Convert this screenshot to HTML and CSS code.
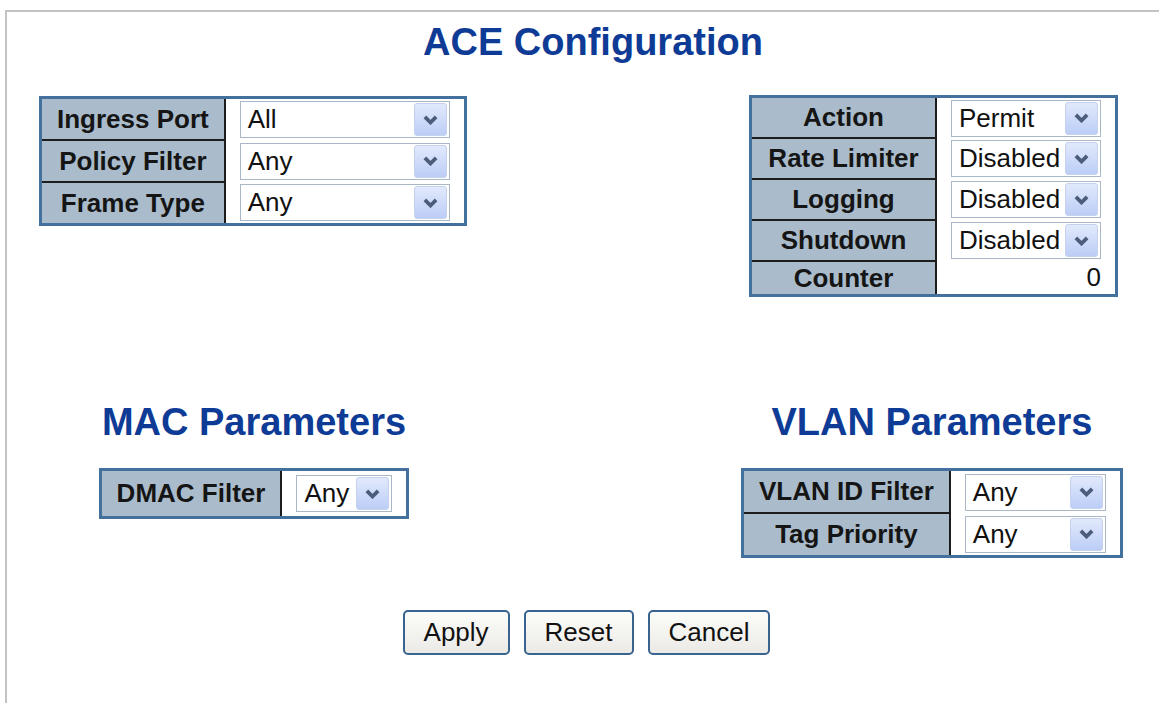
FILE: index.html
```html
<!DOCTYPE html>
<html lang="en">
<head>
	<meta charset="UTF-8">
	<title>ACE Configuration</title>
	<link rel="stylesheet" href="styles.css">
</head>
<body>
	<div class="frame">
		<h1 class="title">ACE Configuration</h1>

		<div class="top-row">
			<table class="config ace-left">
				<tr>
					<th>Ingress Port</th>
					<td><div class="select w-port"><span class="select-text">All</span><span class="select-btn"><svg viewBox="0 0 12 8"><path d="M1.5 1.5l4.5 4.5 4.5-4.5"/></svg></span></div></td>
				</tr>
				<tr>
					<th>Policy Filter</th>
					<td><div class="select w-port"><span class="select-text">Any</span><span class="select-btn"><svg viewBox="0 0 12 8"><path d="M1.5 1.5l4.5 4.5 4.5-4.5"/></svg></span></div></td>
				</tr>
				<tr>
					<th>Frame Type</th>
					<td><div class="select w-port"><span class="select-text">Any</span><span class="select-btn"><svg viewBox="0 0 12 8"><path d="M1.5 1.5l4.5 4.5 4.5-4.5"/></svg></span></div></td>
				</tr>
			</table>

			<table class="config ace-right">
				<tr>
					<th>Action</th>
					<td><div class="select w-action"><span class="select-text">Permit</span><span class="select-btn"><svg viewBox="0 0 12 8"><path d="M1.5 1.5l4.5 4.5 4.5-4.5"/></svg></span></div></td>
				</tr>
				<tr>
					<th>Rate Limiter</th>
					<td><div class="select w-action"><span class="select-text">Disabled</span><span class="select-btn"><svg viewBox="0 0 12 8"><path d="M1.5 1.5l4.5 4.5 4.5-4.5"/></svg></span></div></td>
				</tr>
				<tr>
					<th>Logging</th>
					<td><div class="select w-action"><span class="select-text">Disabled</span><span class="select-btn"><svg viewBox="0 0 12 8"><path d="M1.5 1.5l4.5 4.5 4.5-4.5"/></svg></span></div></td>
				</tr>
				<tr>
					<th>Shutdown</th>
					<td><div class="select w-action"><span class="select-text">Disabled</span><span class="select-btn"><svg viewBox="0 0 12 8"><path d="M1.5 1.5l4.5 4.5 4.5-4.5"/></svg></span></div></td>
				</tr>
				<tr class="counter">
					<th>Counter</th>
					<td class="num">0</td>
				</tr>
			</table>
		</div>

		<div class="param-row">
			<div class="param-col mac-col">
				<h2 class="subtitle">MAC Parameters</h2>
				<table class="config mac">
					<tr>
						<th>DMAC Filter</th>
						<td><div class="select w-dmac"><span class="select-text">Any</span><span class="select-btn"><svg viewBox="0 0 12 8"><path d="M1.5 1.5l4.5 4.5 4.5-4.5"/></svg></span></div></td>
					</tr>
				</table>
			</div>
			<div class="param-col vlan-col">
				<h2 class="subtitle">VLAN Parameters</h2>
				<table class="config vlan">
					<tr>
						<th>VLAN ID Filter</th>
						<td><div class="select w-vlan"><span class="select-text">Any</span><span class="select-btn"><svg viewBox="0 0 12 8"><path d="M1.5 1.5l4.5 4.5 4.5-4.5"/></svg></span></div></td>
					</tr>
					<tr>
						<th>Tag Priority</th>
						<td><div class="select w-vlan"><span class="select-text">Any</span><span class="select-btn"><svg viewBox="0 0 12 8"><path d="M1.5 1.5l4.5 4.5 4.5-4.5"/></svg></span></div></td>
					</tr>
				</table>
			</div>
		</div>

		<div class="buttons">
			<button type="button">Apply</button>
			<button type="button">Reset</button>
			<button type="button">Cancel</button>
		</div>
	</div>
</body>
</html>
```

FILE: styles.css
```css
*{margin:0;padding:0;}
body{
	background: #fff;
	font-family: "Liberation Sans", Arial, sans-serif;
	color: #111;
}
.frame{
	margin: 10px 0 0 5px;
	border-top: 2px solid #c3c3c3;
	border-left: 2px solid #c3c3c3;
	min-height: 693px;
	box-sizing: border-box;
}
.title{
	font-size: 38px;
	line-height: 44px;
	font-weight: bold;
	color: #0e3b95;
	text-align: center;
	padding-left: 20px;
	margin-top: 8px;
}
.subtitle{
	font-size: 38px;
	line-height: 44px;
	font-weight: bold;
	color: #0e3b95;
	text-align: center;
	margin-bottom: 24px;
	white-space: nowrap;
}

/* tables */
.top-row{
	display: flex;
	justify-content: space-between;
	align-items: flex-start;
	padding: 0 41px 0 32px;
	margin-top: 31px;
}
.ace-left{
	margin-top: 1px;
}
.config{
	border-collapse: collapse;
	border: 3px solid #44709e;
	background: #fff;
}
.config th{
	background: #aabccb;
	font-size: 26px;
	font-weight: bold;
	color: #151515;
	text-align: center;
	white-space: nowrap;
	height: 39px;
	padding: 0 15px;
	border-right: 2px solid #1d1d1d;
	border-bottom: 2px solid #1d1d1d;
}
.config tr:last-child th{
	border-bottom: none;
}
.config td{
	padding: 0 14px;
	font-size: 26px;
}
.ace-left th{ width: 151px; height: 40px; }
.ace-right th{ width: 153px; }
.counter th, .counter td{ height: 32px; }
.num{ text-align: right; }
.mac th{ height: 45px; }
.vlan th{ height: 41px; }

/* fake selects */
.select{
	display: flex;
	align-items: center;
	justify-content: space-between;
	height: 37px;
	box-sizing: border-box;
	border: 1px solid #a9b7c7;
	background: #fff;
	padding: 0 2px 0 7px;
	font-size: 26px;
	color: #111;
}
.select-text{
	white-space: nowrap;
}
.select-btn{
	display: flex;
	align-items: center;
	justify-content: center;
	width: 31px;
	height: 31px;
	border: 1px solid #c4d2ee;
	border-radius: 3px;
	background: linear-gradient(#e1e9fc, #bccdf6);
}
.select-btn svg{
	width: 15px;
	height: 10px;
	fill: none;
	stroke: #4c5d7c;
	stroke-width: 3;
}
.w-port{ width: 210px; }
.w-action{ width: 150px; }
.w-dmac{ width: 96px; }
.w-vlan{ width: 141px; }

/* parameter sections */
.param-row{
	display: flex;
	align-items: flex-start;
	padding-left: 92px;
	margin-top: 103px;
}
.param-col{
	display: flex;
	flex-direction: column;
	align-items: center;
}
.mac-col{ width: 310px; }
.vlan-col{ margin-left: 332px; }

/* buttons */
.buttons{
	display: flex;
	justify-content: center;
	gap: 14px;
	padding-left: 7px;
	margin-top: 52px;
}
.buttons button{
	font-family: "Liberation Sans", Arial, sans-serif;
	font-size: 26px;
	color: #111;
	height: 45px;
	padding: 0 19px;
	border: 2px solid #39648f;
	border-radius: 5px;
	background: linear-gradient(#fcfcfa, #ebeae5);
}
```
